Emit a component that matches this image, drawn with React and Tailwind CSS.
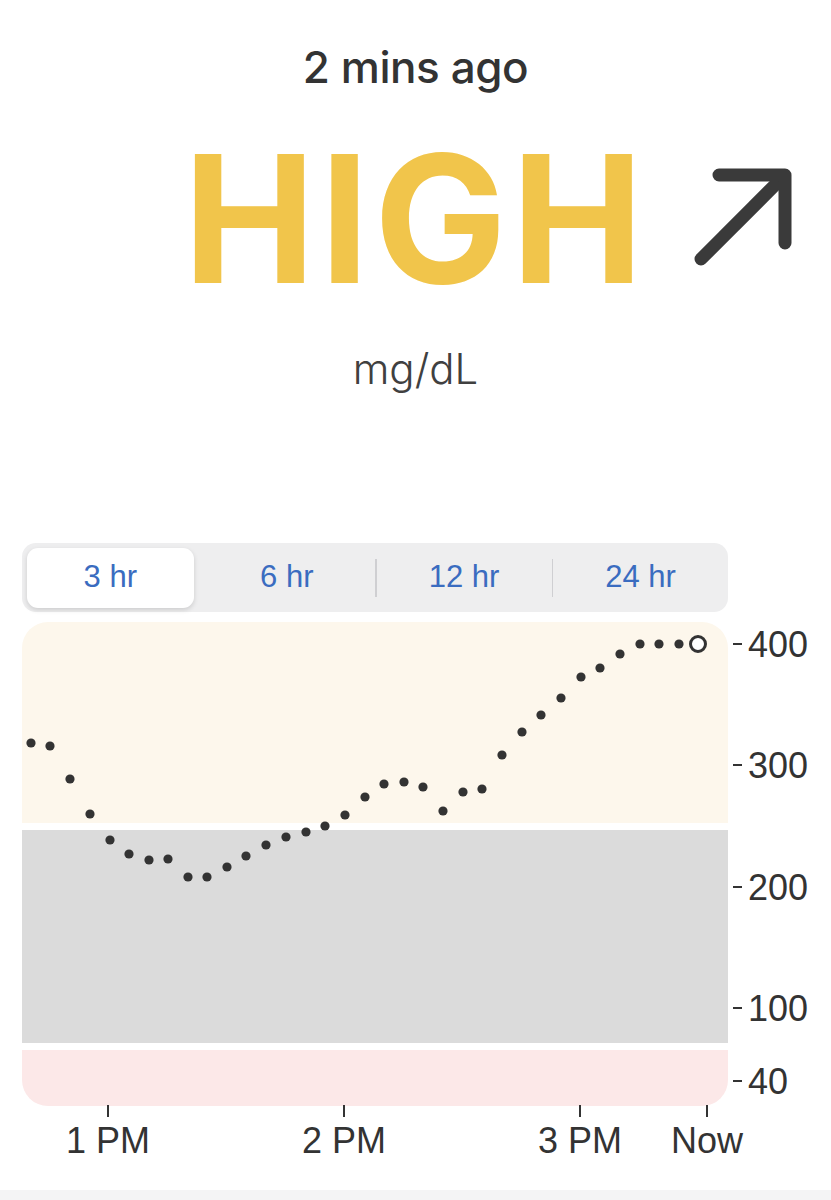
import { useState } from "react";

const dots = [
  [31, 743], [50, 746], [70, 779], [90, 814], [110, 840], [129, 854], [149, 860], [168, 859],
  [188, 877], [207, 877], [227, 867], [246, 856], [266, 845], [286, 837], [306, 832], [325, 826],
  [345, 815], [365, 797], [384, 784], [404, 782], [423, 787], [443, 811], [463, 792], [482, 789],
  [502, 755], [522, 732], [541, 715], [561, 698], [581, 677], [600, 668], [620, 654], [640, 644],
  [659, 644], [679, 644],
];

const yTicks = [
  { y: 644, label: "400" },
  { y: 765, label: "300" },
  { y: 887, label: "200" },
  { y: 1008, label: "100" },
  { y: 1081, label: "40" },
];

const xTicks = [
  { x: 108, label: "1 PM" },
  { x: 344, label: "2 PM" },
  { x: 580, label: "3 PM" },
  { x: 707, label: "Now" },
];

const ranges = ["3 hr", "6 hr", "12 hr", "24 hr"];

function TrendArrow() {
  return (
    <svg width="110" height="110" viewBox="0 0 110 110" fill="none" stroke="#3a3a3a" strokeWidth="13" strokeLinecap="round" strokeLinejoin="round">
      <path d="M11 98 L92 17" />
      <path d="M29 14 H95 V82" />
    </svg>
  );
}

function Chart() {
  const top = 622;
  return (
    <div className="relative h-[540px] w-full">
      <div className="ml-[22px] flex w-[706px] flex-col">
        <div className="h-[201px] rounded-t-[26px] bg-[#fdf7ec]" />
        <div className="mt-[7px] h-[213px] bg-[#dbdbdb]" />
        <div className="mt-[7px] h-[56px] rounded-b-[26px] bg-[#fce8e8]" />
      </div>
      <svg className="absolute left-0 top-0" width="831" height="540" viewBox="0 0 831 540">
        {dots.map(([x, y], i) => (
          <circle key={i} cx={x} cy={y - top} r="4.6" fill="#333333" />
        ))}
        <circle cx="698" cy={644 - top} r="7.5" fill="#ffffff" stroke="#333333" strokeWidth="3" />
        {yTicks.map((t) => (
          <g key={t.label}>
            <line x1="733" x2="742" y1={t.y - top} y2={t.y - top} stroke="#333333" strokeWidth="2" />
            <text x="748" y={t.y - top + 13} fontSize="36" fill="#333333" fontFamily="'Liberation Sans', Arial, sans-serif">
              {t.label}
            </text>
          </g>
        ))}
        {xTicks.map((t) => (
          <g key={t.label}>
            <line x1={t.x} x2={t.x} y1={1105 - top} y2={1117 - top} stroke="#333333" strokeWidth="2" />
            <text x={t.x} y={1153 - top} fontSize="36" fill="#333333" textAnchor="middle" fontFamily="'Liberation Sans', Arial, sans-serif">
              {t.label}
            </text>
          </g>
        ))}
      </svg>
    </div>
  );
}

export default function App() {
  const [range, setRange] = useState("3 hr");

  return (
    <div className="flex h-[1200px] w-[831px] flex-col overflow-hidden bg-white font-['Inter',sans-serif]">
      <div className="pt-[42px] text-center text-[44px] font-medium leading-[50px] tracking-[-0.01em] text-[#333333]">
        2 mins ago
      </div>

      <div className="mt-[47px] grid grid-cols-[1fr_auto_1fr] items-center">
        <div />
        <div className="text-[177px] font-bold leading-[160px] tracking-[0.025em] text-[#f1c54b]">HIGH</div>
        <div className="mb-[6px] ml-[42px]">
          <TrendArrow />
        </div>
      </div>

      <div className="mt-[45px] text-center text-[42px] font-light leading-[50px] text-[#404040]">mg/dL</div>

      <div className="ml-[22px] mt-[149px] flex h-[69px] w-[706px] items-stretch rounded-[14px] bg-[#eeeeef] font-['Liberation_Sans',Arial,sans-serif]">
        {ranges.map((r, i) => (
          <div key={r} className="flex flex-1 items-center">
            {i > 1 && <div className="h-[38px] w-[1.5px] bg-[#cfcfd2]" />}
            <button
              onClick={() => setRange(r)}
              className={
                range === r
                  ? "mx-[5px] my-[5px] flex h-[60px] flex-1 items-center justify-center rounded-[11px] bg-white text-[31px] text-[#3a6cc0] shadow-[0_2px_5px_rgba(0,0,0,0.14)]"
                  : "flex h-full flex-1 items-center justify-center text-[31px] text-[#3a6cc0]"
              }
            >
              {r}
            </button>
          </div>
        ))}
      </div>

      <div className="mt-[10px]">
        <Chart />
      </div>

      <div className="mt-auto h-[10px] bg-[#f4f4f5]" />
    </div>
  );
}
